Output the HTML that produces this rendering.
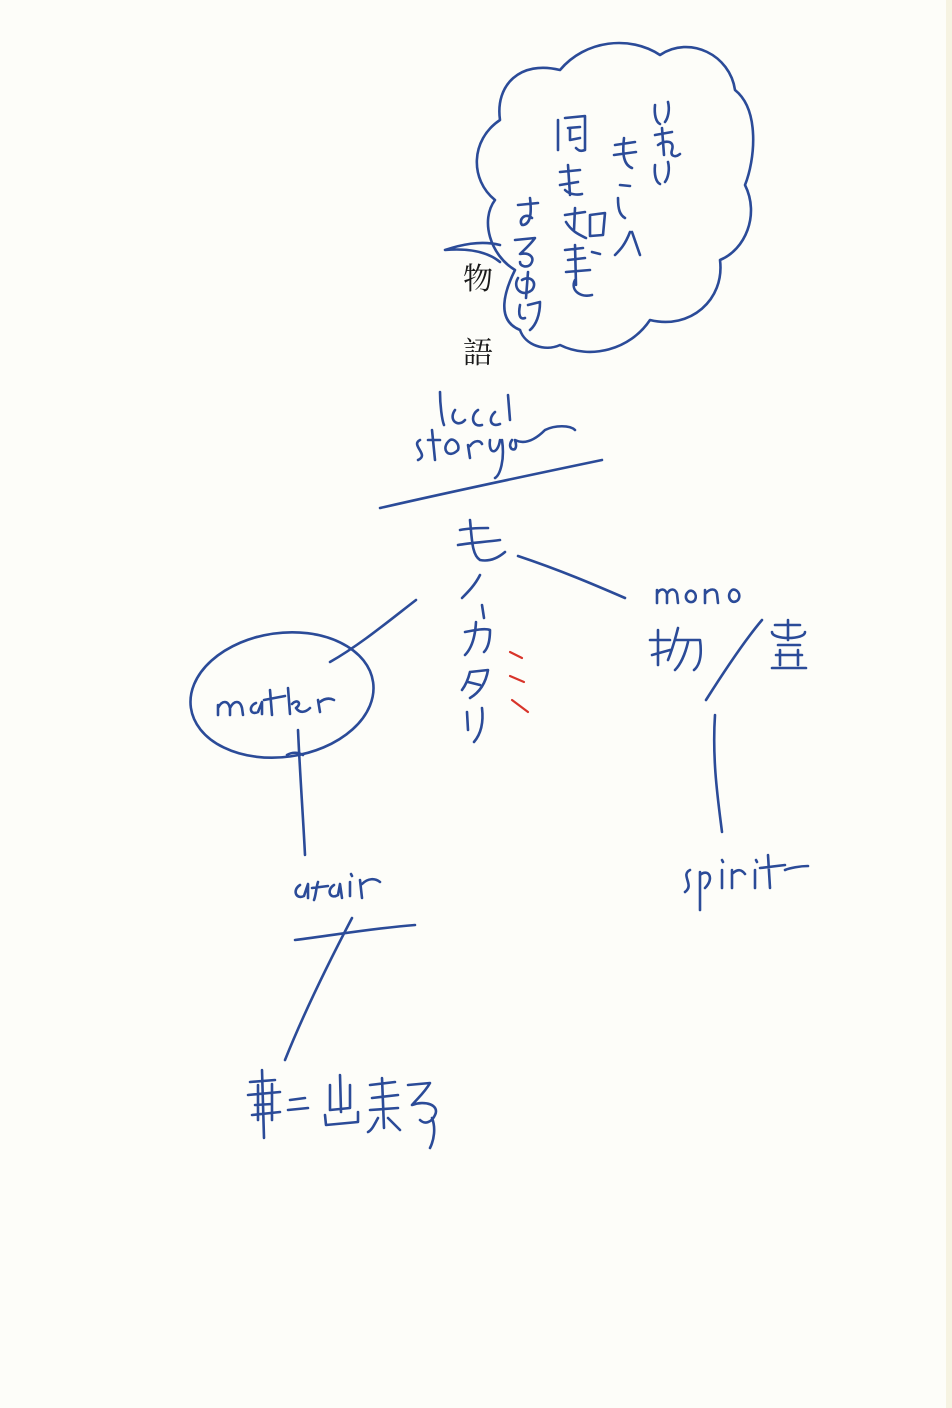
<!DOCTYPE html>
<html><head><meta charset="utf-8"><style>
html,body{margin:0;padding:0;background:#fdfdf9;}
body{width:952px;height:1408px;position:relative;overflow:hidden;font-family:"Liberation Sans","Noto Sans CJK JP",sans-serif;}
.edge{position:absolute;right:0;top:0;width:6px;height:1408px;background:#f6f3e2;}
svg{position:absolute;left:0;top:0;}
</style></head><body>
<div class="edge"></div>
<svg width="952" height="1408" viewBox="0 0 952 1408">
<g fill="none" stroke="#2b4b98" stroke-width="2.6" stroke-linecap="round" stroke-linejoin="round">
<path d="M520,330 C495,320 505,290 515,270 C490,255 480,220 495,200 C470,180 470,140 500,120 C495,85 520,60 560,70 C585,40 630,35 660,55 C690,35 730,55 735,90 C760,110 755,160 745,185 C760,215 745,250 720,260 C725,300 690,330 650,320 C630,350 590,360 560,345 C545,352 525,345 520,330"/>
<path d="M500,245 C480,240 460,245 445,250 C470,248 488,252 500,262"/>
<path d="M380,508 C450,492 530,475 602,460"/>
<path d="M518,556 C560,570 595,585 625,598"/>
<path d="M706,700 C725,670 745,640 762,620"/>
<path d="M715,715 C712,760 718,800 722,832"/>
<path d="M416,600 C390,620 360,645 330,662"/>
<ellipse cx="282" cy="695" rx="92" ry="62" transform="rotate(-8 282 695)"/>
<path d="M298,730 C300,775 303,815 305,855"/>
<path d="M287,755 C292,752 298,752 303,755"/>
<path d="M295,940 C335,935 375,928 415,925"/>
<path d="M352,918 C330,960 305,1010 285,1060"/>
<path d="M440,392 C440,405 442,420 444,425 M455,410 C448,420 458,428 465,420 M478,410 C470,415 472,428 482,425 M495,412 C488,418 490,428 500,424 M508,395 L510,420"/>
<path d="M420,440 C410,445 430,455 418,460 M432,430 L435,460 M428,440 L440,440 M450,440 C440,448 448,460 458,450 C460,444 454,438 450,440 M468,445 L470,458 M470,446 C474,440 480,440 482,444 M490,440 C488,455 498,455 500,440 M502,440 C505,460 500,475 495,478 M512,440 C505,450 520,455 515,440 C525,445 535,440 545,430 C555,425 570,425 575,430"/>
<path d="M460,530 C470,528 480,528 488,528 M458,545 C470,543 485,542 500,540 M470,520 C472,540 472,555 480,560 C490,562 498,558 505,552"/>
<path d="M480,575 C475,585 468,592 462,598"/>
<path d="M482,605 L484,618 M465,632 C475,630 485,628 490,630 C490,640 488,648 484,652 M476,622 C475,640 470,650 465,655"/>
<path d="M470,672 C468,680 465,686 462,690 M470,672 L488,670 C486,682 480,692 470,698 M468,682 L480,685"/>
<path d="M467,712 L468,730 M482,708 C484,725 480,735 474,742"/>
<path d="M657,590 L657,603 M657,594 C660,588 665,588 667,594 L667,603 M667,594 C670,588 675,588 677,594 L678,603 M688,592 C682,598 690,606 695,600 C698,594 692,588 688,592 M705,590 L705,603 M705,594 C710,588 716,588 717,594 L718,603 M732,590 C725,596 732,606 738,600 C742,594 736,588 732,590"/>
<g transform="translate(110,0)">
<path d="M548,630 L548,665 M540,640 L560,640 M542,655 L560,650 M568,628 C565,640 562,650 558,660 M566,640 L590,640 C592,655 590,665 584,670 M578,642 C575,655 570,665 565,670"/>
</g>
<path d="M775,625 L800,625 M788,620 L788,640 M772,632 C772,640 805,640 805,632 M778,645 L800,645 M776,655 L802,655 M780,650 L780,665 M798,650 L798,665 M772,668 L806,668"/>
<path d="M690,870 C680,875 695,885 685,892 M700,872 L700,910 M700,875 C708,868 715,878 705,888 M722,870 L722,888 M722,860 L723,862 M732,870 L732,888 M732,874 C738,868 742,870 745,874 M755,870 L755,888 M756,860 L757,862 M768,855 L770,888 M760,868 L785,865 M785,870 C790,868 800,866 808,866"/>
<path d="M218,705 L218,715 M218,708 C222,700 228,700 230,708 L230,715 M230,708 C234,700 240,700 242,708 L243,715 M256,703 C248,706 250,716 258,712 L262,702 L262,714 M270,690 L272,715 M264,700 L285,696 M288,688 L290,714 M292,704 C298,698 302,704 296,708 C300,714 306,712 310,708 M318,700 L320,712 M320,702 C325,698 330,698 334,700"/>
<path d="M300,885 C292,890 296,900 304,896 L308,884 L308,898 M318,882 C316,888 316,895 314,900 M312,888 L328,886 M334,885 C326,890 330,900 338,895 L340,884 L342,898 M350,882 L350,896 M351,874 L352,876 M360,880 L362,898 M362,884 C368,878 375,878 380,882"/>
<path d="M250,1082 L275,1080 M262,1070 L264,1138 M248,1095 L280,1092 M255,1105 L272,1104 M252,1115 L280,1112 M258,1085 L258,1120 M272,1084 L272,1120"/>
<path d="M290,1100 L305,1098 M288,1110 L308,1108"/>
<path d="M330,1085 L330,1110 L350,1108 L350,1085 M340,1075 L341,1112 M325,1115 L326,1125 L358,1122 L358,1112"/>
<path d="M370,1085 L395,1082 M382,1078 L384,1128 M372,1098 L398,1095 M370,1110 L398,1108 M378,1118 C374,1125 372,1130 368,1132 M388,1118 L400,1130"/>
<path d="M408,1085 L430,1083 C425,1092 418,1098 412,1105 C425,1100 440,1105 435,1115 C432,1122 425,1125 420,1120 M432,1118 C436,1128 434,1140 430,1148"/>
<path d="M655,105 C654,115 656,122 660,124 M668,102 C670,110 668,118 665,122"/>
<path d="M655,135 L672,132 M662,128 L664,155 M658,145 C665,140 675,140 672,150 C670,156 675,158 680,154"/>
<path d="M655,165 C654,175 656,182 660,184 M668,162 C670,170 668,178 665,182"/>
<path d="M615,145 L635,142 M624,138 C622,155 624,165 632,168 M614,155 L636,152"/>
<path d="M620,185 L630,186"/>
<path d="M618,198 C618,210 620,215 625,218"/>
<path d="M630,232 C625,245 620,250 615,255 M632,232 L640,255"/>
<path d="M558,120 L558,150 M565,118 L585,116 L585,150 C580,152 578,150 576,148 M568,128 L580,127 M570,128 L570,140 L580,138"/>
<path d="M560,172 L580,170 M568,165 L570,195 M560,185 L578,182 M565,190 C570,195 578,195 582,194"/>
<path d="M565,215 L585,212 M575,208 L574,230 M566,222 C572,232 580,235 586,238 M590,215 L605,213 L603,235 L590,236 Z"/>
<path d="M565,250 L583,248 M568,260 L585,258 M566,272 L590,270 M575,245 L576,285 M592,252 L600,254"/>
<path d="M575,280 C570,290 580,298 592,295"/>
<path d="M518,205 L538,203 M530,198 C532,215 530,225 522,225 C518,220 525,212 532,218"/>
<path d="M515,240 L535,238 C530,245 524,250 520,254 C530,252 536,258 530,265 C526,268 520,266 520,262"/>
<path d="M518,278 C512,288 522,298 532,290 C538,282 530,275 522,280 M528,272 L526,298"/>
<path d="M520,305 C518,315 520,320 525,318 M528,305 L540,302 C540,315 536,325 530,330"/>
</g>
<g fill="none" stroke="#d8342a" stroke-width="2.2" stroke-linecap="round">
<path d="M510,652 L522,658 M510,676 L524,682 M512,700 L528,712"/>
</g>
<text x="463" y="289" font-family="'Liberation Serif','Noto Serif CJK SC',serif" font-size="30" fill="#1a1a1a">物</text>
<text x="463" y="363" font-family="'Liberation Serif','Noto Serif CJK SC',serif" font-size="30" fill="#1a1a1a">語</text>
</svg>
</body></html>
